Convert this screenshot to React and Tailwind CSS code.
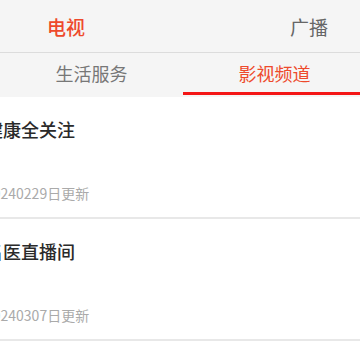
export default function App() {
  const items = [
    { title: "健康全关注", date: "20240229日更新" },
    { title: "名医直播间", date: "20240307日更新" },
  ];
  return (
    <div className="w-[360px] h-[360px] overflow-hidden bg-white font-['Noto_Sans_CJK_SC',sans-serif]">
      <div className="h-[53px] bg-[#f5f5f5] border-b border-[#dcdcdc] flex items-center">
        <span className="ml-[47px] text-[19px] leading-none font-medium text-[#ee4a2c]">电视</span>
        <span className="ml-auto mr-[32px] text-[19px] leading-none text-[#666]">广播</span>
      </div>
      <div className="h-[44px] bg-[#f5f5f5] flex w-[366px]">
        <div className="w-[183px] flex flex-col">
          <div className="flex-1 flex items-center justify-center text-[18px] leading-none text-[#777]">生活服务</div>
          <div className="h-[3px]"></div>
          <div className="h-[2px]"></div>
        </div>
        <div className="w-[183px] flex flex-col">
          <div className="flex-1 flex items-center justify-center text-[18px] leading-none text-[#ee4a2c]">影视频道</div>
          <div className="h-[3px] bg-[#f41616]"></div>
          <div className="h-[2px]"></div>
        </div>
      </div>
      <div className="ml-[-15px]">
        {items.map((it) => (
          <div key={it.title} className="pt-[20px] pb-[14px] border-b-2 border-[#e8e8e8]">
            <div className="text-[18px] leading-[24px] font-medium text-[#2a2a2a]">{it.title}</div>
            <div className="mt-[42px] text-[14px] leading-[20px] text-[#aaa]">{it.date}</div>
          </div>
        ))}
      </div>
    </div>
  );
}
